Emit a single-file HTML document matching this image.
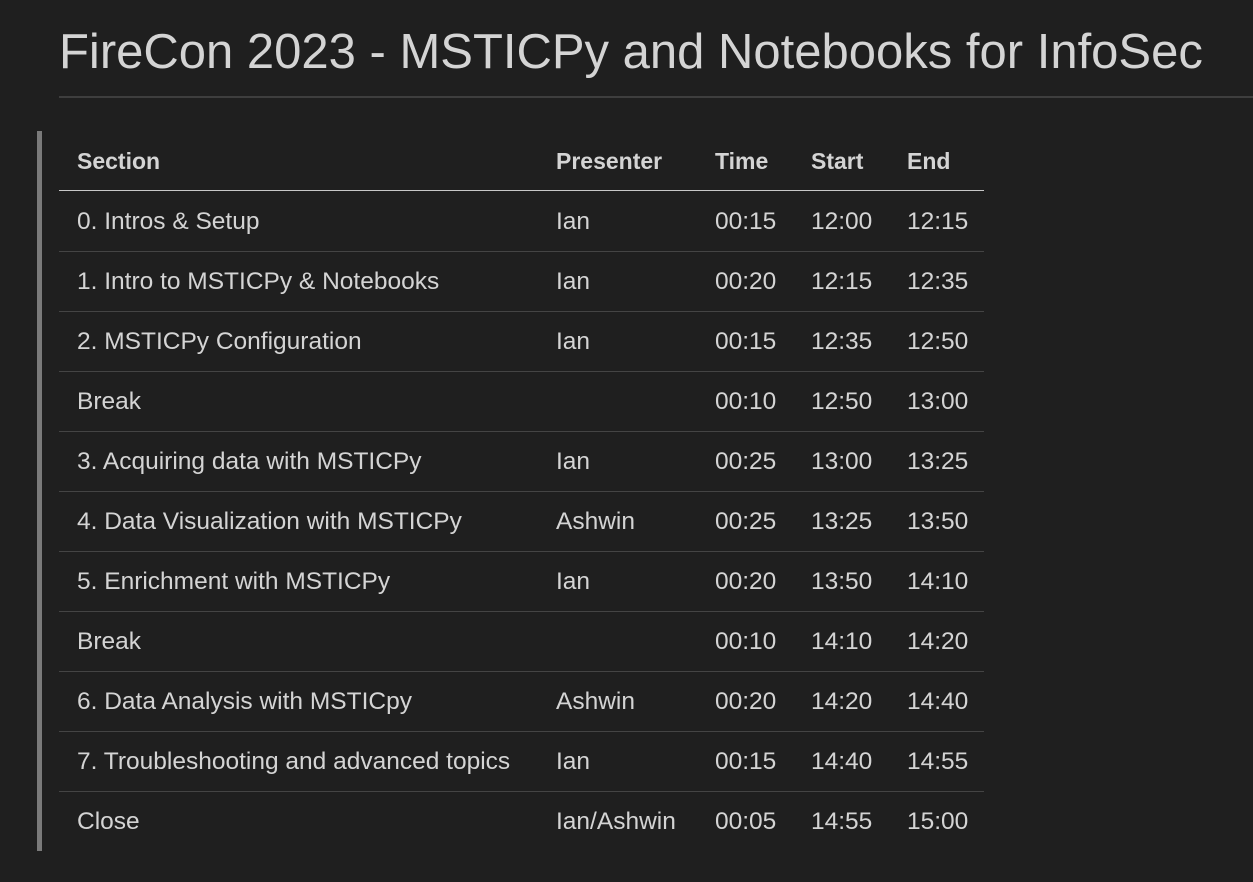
<!DOCTYPE html>
<html><head><meta charset="utf-8"><style>
body{margin:0;background:#1f1f1f;width:1253px;height:882px;overflow:hidden;font-family:"Liberation Sans",sans-serif;color:#d4d4d4;position:relative}
h1{position:absolute;left:59px;top:22px;margin:0;font-weight:normal;font-size:49px;line-height:60px;white-space:nowrap;color:#d4d4d4}
.hr{position:absolute;left:59px;top:96px;width:1194px;height:2px;background:#3e3e3e}
.bar{position:absolute;left:37px;top:131px;width:5px;height:720px;background:#7a7a7a}
.row{position:absolute;left:59px;width:925px;height:60px;font-size:24.5px}
.row span{position:absolute;top:1px;line-height:60px;white-space:nowrap}
.row.b{border-bottom:1px solid #444}
.hd{font-weight:bold;font-size:23px;border-bottom:1px solid #c8c8c8}
.c1{left:18px}.c2{left:497px}.c3{left:656px}.c4{left:752px}.c5{left:848px}
</style></head><body>
<h1>FireCon 2023 - MSTICPy and Notebooks for InfoSec</h1>
<div class="hr"></div>
<div class="bar"></div>
<div class="row hd" style="top:130px"><span class="c1">Section</span><span class="c2">Presenter</span><span class="c3">Time</span><span class="c4">Start</span><span class="c5">End</span></div>
<div class="row b" style="top:191px"><span class="c1">0. Intros &amp; Setup</span><span class="c2">Ian</span><span class="c3">00:15</span><span class="c4">12:00</span><span class="c5">12:15</span></div>
<div class="row b" style="top:251px"><span class="c1">1. Intro to MSTICPy &amp; Notebooks</span><span class="c2">Ian</span><span class="c3">00:20</span><span class="c4">12:15</span><span class="c5">12:35</span></div>
<div class="row b" style="top:311px"><span class="c1">2. MSTICPy Configuration</span><span class="c2">Ian</span><span class="c3">00:15</span><span class="c4">12:35</span><span class="c5">12:50</span></div>
<div class="row b" style="top:371px"><span class="c1">Break</span><span class="c2"></span><span class="c3">00:10</span><span class="c4">12:50</span><span class="c5">13:00</span></div>
<div class="row b" style="top:431px"><span class="c1">3. Acquiring data with MSTICPy</span><span class="c2">Ian</span><span class="c3">00:25</span><span class="c4">13:00</span><span class="c5">13:25</span></div>
<div class="row b" style="top:491px"><span class="c1">4. Data Visualization with MSTICPy</span><span class="c2">Ashwin</span><span class="c3">00:25</span><span class="c4">13:25</span><span class="c5">13:50</span></div>
<div class="row b" style="top:551px"><span class="c1">5. Enrichment with MSTICPy</span><span class="c2">Ian</span><span class="c3">00:20</span><span class="c4">13:50</span><span class="c5">14:10</span></div>
<div class="row b" style="top:611px"><span class="c1">Break</span><span class="c2"></span><span class="c3">00:10</span><span class="c4">14:10</span><span class="c5">14:20</span></div>
<div class="row b" style="top:671px"><span class="c1">6. Data Analysis with MSTICpy</span><span class="c2">Ashwin</span><span class="c3">00:20</span><span class="c4">14:20</span><span class="c5">14:40</span></div>
<div class="row b" style="top:731px"><span class="c1">7. Troubleshooting and advanced topics</span><span class="c2">Ian</span><span class="c3">00:15</span><span class="c4">14:40</span><span class="c5">14:55</span></div>
<div class="row" style="top:791px"><span class="c1">Close</span><span class="c2">Ian/Ashwin</span><span class="c3">00:05</span><span class="c4">14:55</span><span class="c5">15:00</span></div>
</body></html>
